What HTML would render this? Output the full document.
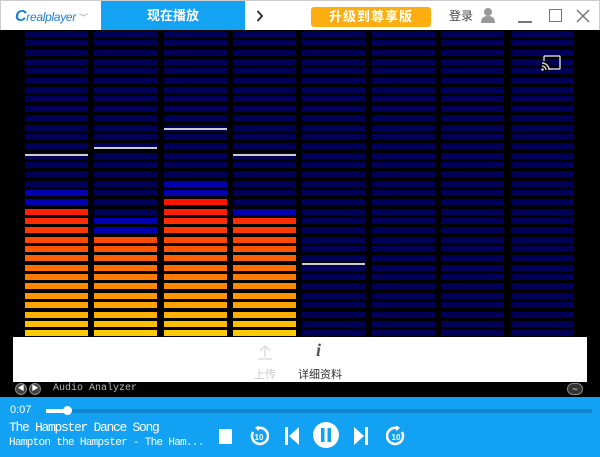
<!DOCTYPE html>
<html><head><meta charset="utf-8"><style>
*{margin:0;padding:0;box-sizing:border-box}
body{width:600px;height:457px;overflow:hidden;background:#000;font-family:"Liberation Sans","Noto Sans CJK SC",sans-serif;position:relative}
.a{position:absolute}
#top{left:0;top:0;width:600px;height:30px;background:#fff;border:1px solid #ccc;border-bottom:none}
.seg{position:absolute;height:6px;width:63px}
</style></head><body>
<div id="top" class="a">
 <div class="a" style="left:14px;top:7px;font:italic 12px 'Liberation Sans',sans-serif;color:#1b7fd8;letter-spacing:-0.3px"><span style="font-weight:bold;font-size:16px">C</span>realplayer <span style="color:#999;font-style:normal;font-size:9px">﹀</span></div>
 <div class="a" style="left:100px;top:0;width:144px;height:29px;background:#14a2f2;color:#fff;font-size:13px;font-weight:bold;text-align:center;line-height:29px">现在播放</div>
 <svg class="a" style="left:255px;top:9px" width="8" height="12"><path d="M1.5 1L6 6L1.5 11" stroke="#333" stroke-width="2" fill="none"/></svg>
 <div class="a" style="left:310px;top:6px;width:120px;height:20px;background:#fcae11;border-radius:3px;color:#fff;font-size:13px;font-weight:bold;text-align:center;line-height:20px;letter-spacing:1px">升级到尊享版</div>
 <div class="a" style="left:448px;top:6px;font-size:12px;color:#444">登录</div>
 <svg class="a" style="left:479px;top:6px" width="16" height="16"><circle cx="8" cy="5" r="4" fill="#999"/><path d="M1 16 Q1 9 8 9 Q15 9 15 16Z" fill="#999"/></svg>
 <div class="a" style="left:517px;top:20px;width:14px;height:2px;background:#777"></div>
 <div class="a" style="left:548px;top:8px;width:13px;height:13px;border:1.5px solid #777"></div>
 <svg class="a" style="left:575px;top:8px" width="14" height="14"><path d="M1 1L13 13M13 1L1 13" stroke="#777" stroke-width="1.5"/></svg>
</div>
<div id="viz"></div>
<svg class="a" style="left:541px;top:55px" width="20" height="16"><rect x="3" y="1" width="16" height="13" rx="1" fill="none" stroke="#ccc" stroke-width="1.5"/><rect x="0" y="6" width="8" height="10" fill="#000"/><path d="M1 8 A7 7 0 0 1 8 15 M1 11 A4 4 0 0 1 5 15" stroke="#ccc" stroke-width="1.5" fill="none"/><circle cx="1.5" cy="14.5" r="1.3" fill="#ccc"/></svg>
<div class="a" style="left:13px;top:337px;width:574px;height:45px;background:#fff"></div>
<svg class="a" style="left:257px;top:344px" width="16" height="16"><path d="M8 2V13M3 7L8 2L13 7M1 15H15" stroke="#ddd" stroke-width="1.5" fill="none"/></svg>
<div class="a" style="left:254px;top:366px;color:#ccc;font-size:11px">上传</div>
<div class="a" style="left:316px;top:340px;color:#555;font:italic bold 18px 'Liberation Serif',serif">i</div>
<div class="a" style="left:298px;top:366px;color:#333;font-size:11px">详细资料</div>
<div class="a" style="left:15px;top:383px;width:12px;height:12px;border-radius:6px;background:#444;border:1px solid #888;color:#fff;font-size:7px;line-height:10px;text-align:center">◀</div>
<div class="a" style="left:29px;top:383px;width:12px;height:12px;border-radius:6px;background:#444;border:1px solid #888;color:#fff;font-size:7px;line-height:10px;text-align:center">▶</div>
<div class="a" style="left:53px;top:383px;color:#bbb;font:10px 'Liberation Mono',monospace">Audio Analyzer</div>
<div class="a" style="left:567px;top:383px;width:16px;height:12px;border-radius:6px;background:#333;border:1px solid #888;color:#fff;font-size:9px;line-height:10px;text-align:center">~</div>
<div class="a" style="left:0;top:397px;width:600px;height:60px;background:#12a1f3"></div>
<div class="a" style="left:10px;top:404px;color:#fff;font-size:11px">0:07</div>
<div class="a" style="left:46px;top:409px;width:546px;height:4px;background:#0b86cf"></div>
<div class="a" style="left:46px;top:409px;width:22px;height:4px;background:#fff"></div>
<div class="a" style="left:63px;top:406px;width:9px;height:9px;border-radius:5px;background:#fff"></div>
<div class="a" style="left:9px;top:420px;color:#fff;font:13px 'Liberation Mono',monospace;letter-spacing:-1.3px">The Hampster Dance Song</div>
<div class="a" style="left:9px;top:437px;color:#fff;font:11px 'Liberation Mono',monospace;letter-spacing:-0.7px">Hampton the Hampster - The Ham...</div>
<div class="a" style="left:219px;top:429px;width:13px;height:15px;background:#fff"></div>
<svg class="a" style="left:249px;top:426px" width="20" height="20"><path d="M4 6 A8 8 0 1 0 10 2" stroke="#fff" stroke-width="2.5" fill="none"/><path d="M10 -1 L6 2 L10 5Z" fill="#fff"/><text x="10" y="14" font-size="8" font-weight="bold" fill="#fff" text-anchor="middle" font-family="Liberation Sans">10</text></svg>
<svg class="a" style="left:285px;top:427px" width="15" height="18"><rect x="0" y="0" width="3" height="18" fill="#fff"/><path d="M14 0 L4 9 L14 18Z" fill="#fff"/></svg>
<svg class="a" style="left:312px;top:421px" width="28" height="28"><circle cx="14" cy="14" r="13" fill="#fff"/><rect x="9" y="7" width="3.5" height="14" fill="#12a1f3"/><rect x="15.5" y="7" width="3.5" height="14" fill="#12a1f3"/></svg>
<svg class="a" style="left:353px;top:427px" width="15" height="18"><path d="M1 0 L11 9 L1 18Z" fill="#fff"/><rect x="12" y="0" width="3" height="18" fill="#fff"/></svg>
<svg class="a" style="left:386px;top:426px" width="20" height="20"><path d="M16 6 A8 8 0 1 1 10 2" stroke="#fff" stroke-width="2.5" fill="none"/><path d="M10 -1 L14 2 L10 5Z" fill="#fff"/><text x="10" y="14" font-size="8" font-weight="bold" fill="#fff" text-anchor="middle" font-family="Liberation Sans">10</text></svg>
<script>
var v=document.getElementById('viz'),h='';
var xs=[25,94,164,233,302,372,441,511];
var lit=[209,237,200,218,999,999,999,999];
var bright=[[191,200],[219,228],[182,191],[209],[],[],[],[]];
var peak=[154,147,128,154,263,0,0,0];
for(var c=0;c<8;c++){for(var i=0;i<33;i++){var y=Math.round(31+i*9.35);if(y>336)break;var col='#000058';
if(y>=lit[c]-3){var t=(y-200)/136;t=Math.max(0,Math.min(1,t));var g=Math.round(20+t*190);col='rgb(255,'+g+',0)';}
else{for(var b of bright[c])if(Math.abs(y-b)<4)col='#0000b0';}
h+='<div class="seg" style="left:'+xs[c]+'px;top:'+y+'px;background:'+col+'"></div>';}
if(peak[c])h+='<div class="seg" style="left:'+xs[c]+'px;top:'+peak[c]+'px;height:2px;background:#ccc"></div>';}
v.innerHTML=h;
</script>
</body></html>
